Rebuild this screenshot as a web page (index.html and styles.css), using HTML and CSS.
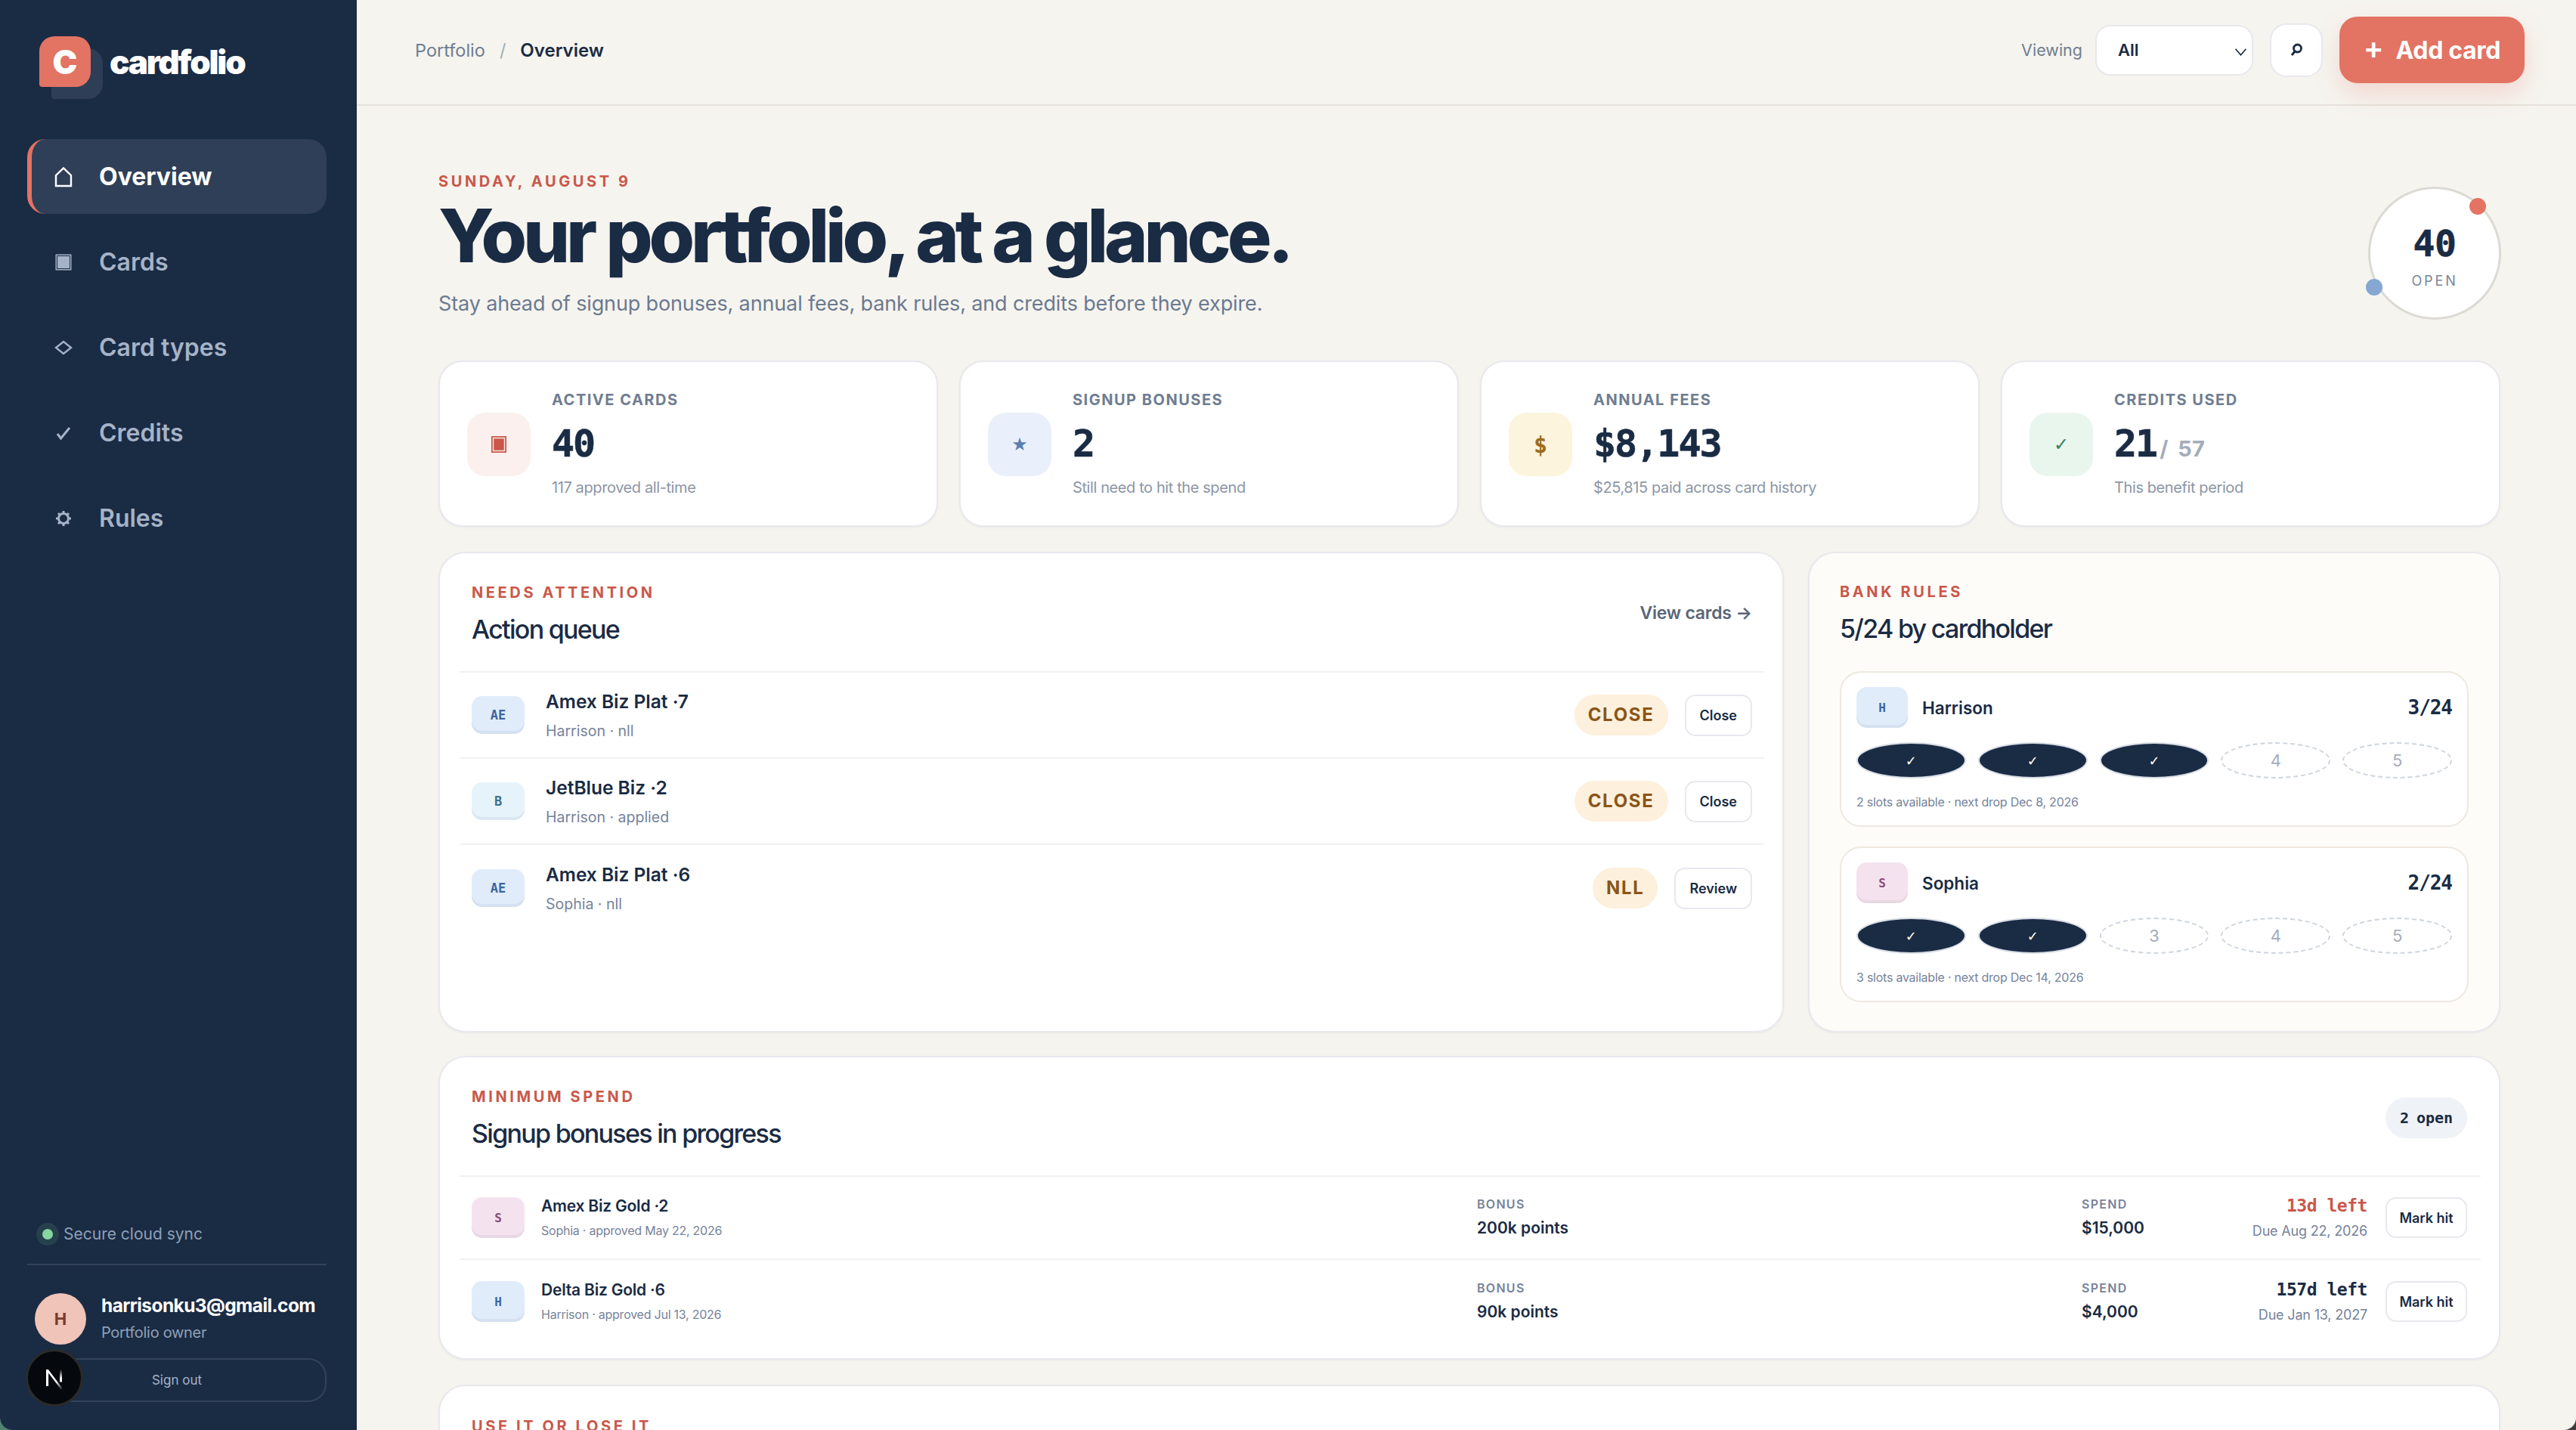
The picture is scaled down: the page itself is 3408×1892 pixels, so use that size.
FILE: index.html
```html
<!DOCTYPE html>
<html lang="en">
<head>
<meta charset="utf-8">
<title>cardfolio</title>
<link rel="stylesheet" href="styles.css">
</head>
<body>
<div class="app">
  <aside class="side">
    <div class="brand">
      <div class="logo"><span class="logo-c">C</span></div>
      <span class="brand-name">cardfolio</span>
    </div>
    <nav class="nav">
      <a class="nav-item active"><svg class="nav-ic" viewBox="0 0 24 28"><path d="M2 26V12L12 2.500 22 12v14z" fill="none" stroke="currentColor" stroke-width="2.400"/></svg>Overview</a>
      <a class="nav-item"><svg class="nav-ic" viewBox="0 -2 24 28"><rect x="1.500" y="1.500" width="21" height="21" fill="currentColor"/><rect x="3.500" y="3.500" width="17" height="17" fill="none" stroke="#1a2b44" stroke-width="1"/></svg>Cards</a>
      <a class="nav-item"><svg class="nav-ic" viewBox="0 -2 24 28"><path d="M12 4l10 8-10 8-10-8z" fill="none" stroke="currentColor" stroke-width="2.400"/></svg>Card types</a>
      <a class="nav-item"><svg class="nav-ic" viewBox="0 -2 24 28"><path d="M4 13l4.500 6L20 5" fill="none" stroke="currentColor" stroke-width="3"/></svg>Credits</a>
      <a class="nav-item"><svg class="nav-ic" viewBox="0 -2 24 28"><circle cx="12" cy="12" r="6.500" fill="none" stroke="currentColor" stroke-width="3"/><path d="M12 2v4M12 18v4M2 12h4M18 12h4M5 5l3 3M16 16l3 3M19 5l-3 3M8 16l-3 3" stroke="currentColor" stroke-width="3"/></svg>Rules</a>
    </nav>
    <div class="side-foot">
      <div class="sync"><span class="sync-dot"></span>Secure cloud sync</div>
      <div class="user">
        <div class="user-av">H</div>
        <div class="user-txt">
          <div class="user-mail">harrisonku3@gmail.com</div>
          <div class="user-role">Portfolio owner</div>
        </div>
      </div>
      <button class="signout">Sign out</button>
    </div>
    <div class="next-badge"><svg viewBox="0 0 40 40" class="next-n"><defs><linearGradient id="nfade" x1="0" y1="0" x2="1" y2="1"><stop offset="0.6" stop-color="#fff"/><stop offset="1" stop-color="#fff" stop-opacity="0"/></linearGradient><linearGradient id="nfade2" x1="0" y1="0" x2="0" y2="1"><stop offset="0" stop-color="#fff" stop-opacity="0"/><stop offset="0.7" stop-color="#fff"/></linearGradient></defs><path d="M10 30V10h2.600L30 33l-2 1L12.800 14v16z" fill="url(#nfade)"/><rect x="26.500" y="10" width="2.600" height="15" fill="url(#nfade2)"/></svg></div>
  </aside>
  <div class="main">
    <header class="top">
      <div class="crumbs"><span class="crumb">Portfolio</span><span class="crumb-sep">/</span><span class="crumb-now">Overview</span></div>
      <div class="top-right">
        <span class="viewing">Viewing</span>
        <div class="select">All<svg class="chev" viewBox="0 0 16 16"><path d="M1.500 4.500L8 12l6.500-7.500" fill="none" stroke="#1a2b44" stroke-width="1.600"/></svg></div>
        <button class="search"><svg viewBox="0 0 20 20" class="search-ic"><circle cx="11.500" cy="8" r="5" fill="none" stroke="#1a2b44" stroke-width="2.800"/><path d="M8 12l-4 5" stroke="#1a2b44" stroke-width="3"/></svg></button>
        <button class="add"><span class="add-plus">+</span>Add card</button>
      </div>
    </header>
    <main class="content">
      <section class="hero">
        <div class="hero-txt">
          <div class="date">SUNDAY, AUGUST 9</div>
          <h1 class="title">Your portfolio, at a glance.</h1>
          <p class="lede">Stay ahead of signup bonuses, annual fees, bank rules, and credits before they expire.</p>
        </div>
        <div class="ring">
          <span class="ring-num">40</span>
          <span class="ring-lab">OPEN</span>
          <i class="ring-dot red"></i>
          <i class="ring-dot blue"></i>
        </div>
      </section>

      <section class="stats">
        <div class="stat">
          <div class="stat-ic red"><svg viewBox="0 0 20 22" width="20" height="22"><rect x="0" y="0" width="20" height="22" fill="#c9584a"/><rect x="2.500" y="2.500" width="15" height="17" fill="none" stroke="#fbe7e2" stroke-width="1.500"/></svg></div>
          <div class="stat-body"><div class="stat-lab">ACTIVE CARDS</div><div class="stat-val">40</div><div class="stat-sub">117 approved all-time</div></div>
        </div>
        <div class="stat">
          <div class="stat-ic blue"><span class="gl">★</span></div>
          <div class="stat-body"><div class="stat-lab">SIGNUP BONUSES</div><div class="stat-val">2</div><div class="stat-sub">Still need to hit the spend</div></div>
        </div>
        <div class="stat">
          <div class="stat-ic amber"><span class="gl b">$</span></div>
          <div class="stat-body"><div class="stat-lab">ANNUAL FEES</div><div class="stat-val">$8,143</div><div class="stat-sub">$25,815 paid across card history</div></div>
        </div>
        <div class="stat">
          <div class="stat-ic green"><span class="gl">✓</span></div>
          <div class="stat-body"><div class="stat-lab">CREDITS USED</div><div class="stat-val">21<span class="stat-of">/ 57</span></div><div class="stat-sub">This benefit period</div></div>
        </div>
      </section>

      <section class="two">
        <div class="panel">
          <div class="panel-head">
            <div><div class="eyebrow">NEEDS ATTENTION</div><h2 class="panel-title">Action queue</h2></div>
            <a class="view">View cards →</a>
          </div>
          <div class="row">
            <div class="av av-blue">AE</div>
            <div class="row-txt"><div class="row-name">Amex Biz Plat ·7</div><div class="row-sub">Harrison · nll</div></div>
            <span class="pill">CLOSE</span><button class="btn">Close</button>
          </div>
          <div class="row">
            <div class="av av-sky">B</div>
            <div class="row-txt"><div class="row-name">JetBlue Biz ·2</div><div class="row-sub">Harrison · applied</div></div>
            <span class="pill">CLOSE</span><button class="btn">Close</button>
          </div>
          <div class="row">
            <div class="av av-blue">AE</div>
            <div class="row-txt"><div class="row-name">Amex Biz Plat ·6</div><div class="row-sub">Sophia · nll</div></div>
            <span class="pill">NLL</span><button class="btn">Review</button>
          </div>
        </div>
        <div class="panel panel-cream">
          <div class="panel-head bank-head">
            <div><div class="eyebrow">BANK RULES</div><h2 class="panel-title">5/24 by cardholder</h2></div>
          </div>
          <div class="holder">
            <div class="holder-top"><div class="av av-blue av-sm">H</div><span class="holder-name">Harrison</span><span class="holder-count">3/24</span></div>
            <div class="slots"><span class="slot on">✓</span><span class="slot on">✓</span><span class="slot on">✓</span><span class="slot">4</span><span class="slot">5</span></div>
            <div class="holder-sub">2 slots available · next drop Dec 8, 2026</div>
          </div>
          <div class="holder">
            <div class="holder-top"><div class="av av-pink av-sm">S</div><span class="holder-name">Sophia</span><span class="holder-count">2/24</span></div>
            <div class="slots"><span class="slot on">✓</span><span class="slot on">✓</span><span class="slot">3</span><span class="slot">4</span><span class="slot">5</span></div>
            <div class="holder-sub">3 slots available · next drop Dec 14, 2026</div>
          </div>
        </div>
      </section>

      <section class="panel spend">
        <div class="panel-head">
          <div><div class="eyebrow">MINIMUM SPEND</div><h2 class="panel-title">Signup bonuses in progress</h2></div>
          <span class="count">2 open</span>
        </div>
        <div class="brow">
          <div class="b-id"><div class="av av-pink av-b">S</div><div><div class="b-name">Amex Biz Gold ·2</div><div class="b-sub">Sophia · approved May 22, 2026</div></div></div>
          <div class="b-col"><div class="b-lab">BONUS</div><div class="b-val">200k points</div></div>
          <div class="b-col"><div class="b-lab">SPEND</div><div class="b-val">$15,000</div></div>
          <div class="b-end"><div class="b-due"><div class="b-left hot">13d left</div><div class="b-date">Due Aug 22, 2026</div></div><button class="btn btn-mark">Mark hit</button></div>
        </div>
        <div class="brow">
          <div class="b-id"><div class="av av-blue av-b">H</div><div><div class="b-name">Delta Biz Gold ·6</div><div class="b-sub">Harrison · approved Jul 13, 2026</div></div></div>
          <div class="b-col"><div class="b-lab">BONUS</div><div class="b-val">90k points</div></div>
          <div class="b-col"><div class="b-lab">SPEND</div><div class="b-val">$4,000</div></div>
          <div class="b-end"><div class="b-due"><div class="b-left">157d left</div><div class="b-date">Due Jan 13, 2027</div></div><button class="btn btn-mark">Mark hit</button></div>
        </div>
      </section>

      <section class="panel lose">
        <div class="eyebrow">USE IT OR LOSE IT</div>
      </section>
    </main>
  </div>
</div>
</body>
</html>
```
FILE: styles.css
```css
* { box-sizing: border-box; }
html { background: linear-gradient(90deg, #4f8570 50%, #3c3c3c 50%); }
html, body { margin: 0; height: 100%; overflow: hidden; }
body { font-family: "Inter", "Liberation Sans", sans-serif; color: #1a2b44; }
button { font-family: inherit; }
.app { display: flex; height: 1892px; overflow: hidden; background: #f6f4ef; border-radius: 0 0 16px 16px; }

.side { position: relative; width: 472px; flex: none; background: #1a2b44; padding: 48px 40px 37px 36px; display: flex; flex-direction: column; }
.brand { display: flex; gap: 25px; padding-left: 16px; height: 84px; align-items: flex-start; }
.logo { position: relative; width: 68px; height: 67px; background: #e37363; border-radius: 20px 20px 20px 4px; display: flex; align-items: center; justify-content: center; box-shadow: 16px 16px 0 #2e3e56; }
.logo-c { font: 900 44px/1 "Inter", sans-serif; color: #fff; }
.brand-name { font: 900 44px/68px "Inter", sans-serif; letter-spacing: -0.05em; color: #fff; }
.nav { margin-top: 52px; display: flex; flex-direction: column; gap: 14px; }
.nav-item { height: 99px; display: flex; align-items: center; gap: 35px; padding-left: 36px; font-weight: 600; font-size: 32px; color: #a5b3c8; border-radius: 24px; }
.nav-item.active { background: #2f3f57; color: #fff; border-left: 6px solid #e37363; padding-left: 30px; font-weight: 700; }
.nav-ic { width: 24px; height: 28px; flex: none; }
.side-foot { margin-top: auto; }
.sync { display: flex; align-items: center; gap: 6px; font-size: 21px; color: #8fa0b6; padding-left: 12px; padding-bottom: 25px; border-bottom: 2px solid #334359; height: 56px; }
.sync-dot { width: 14px; height: 14px; margin: 0 8px; border-radius: 50%; background: #86d6a0; box-shadow: 0 0 0 8px #27404d; flex: none; }
.user { display: flex; align-items: center; gap: 20px; padding: 35px 0 0 10px; }
.user-av { width: 68px; height: 68px; border-radius: 50%; background: #f0c4b8; color: #7a3b2e; font-weight: 700; font-size: 22px; display: flex; align-items: center; justify-content: center; flex: none; }
.user-mail { font-weight: 700; font-size: 24.500px; color: #fff; line-height: 36px; letter-spacing: -0.025em; white-space: nowrap; }
.user-role { font-size: 20px; color: #8fa0b6; line-height: 36px; letter-spacing: -0.015em; }
.signout { display: block; width: 100%; height: 58px; margin-top: 16px; background: transparent; border: 2px solid #334359; border-radius: 24px; color: #a5b3c8; font-size: 17px; }
.next-badge { position: absolute; left: 34px; top: 1785px; width: 76px; height: 76px; border-radius: 50%; background: #05090d; border: 3px solid #2b2b2b; display: flex; align-items: center; justify-content: center; }
.next-n { width: 44px; height: 44px; }

.main { flex: 1; min-width: 0; display: flex; flex-direction: column; }
.top { flex: none; height: 140px; border-bottom: 2px solid #e5e2db; display: flex; align-items: center; justify-content: space-between; padding: 0 68px 6px 77px; }
.crumbs { display: flex; align-items: center; font-size: 23.500px; }
.crumb { color: #6f7d91; }
.crumb-sep { color: #a3adba; margin: 0 19px; }
.crumb-now { font-weight: 600; font-size: 24px; color: #1a2b44; }
.top-right { display: flex; align-items: center; }
.viewing { font-size: 21.500px; color: #6f7d91; margin-right: 17px; }
.select { position: relative; width: 209px; height: 67px; background: #fff; border: 2px solid #e8e8ee; border-radius: 20px; padding-left: 28px; font-weight: 600; font-size: 22px; display: flex; align-items: center; }
.chev { position: absolute; right: 6px; top: 25px; width: 17px; height: 17px; }
.search { width: 70px; height: 71px; margin-left: 22px; background: #fff; border: 2px solid #e8e8ee; border-radius: 22px; display: flex; align-items: center; justify-content: center; padding: 0; }
.search-ic { width: 20px; height: 20px; }
.add { height: 88px; width: 245px; margin-left: 22px; background: #e37363; border: 0; border-radius: 24px; color: #fff; font-weight: 700; font-size: 32px; letter-spacing: -0.01em; display: flex; align-items: center; justify-content: center; gap: 16px; box-shadow: 0 14px 32px rgba(227, 115, 99, .22); }
.add-plus { font-size: 40px; font-weight: 600; line-height: 1; margin-top: -4px; }

.content { flex: 1; min-height: 0; overflow: hidden; padding: 0 100px 0 108px; }
.hero { display: flex; justify-content: space-between; padding-top: 88px; height: 337px; position: relative; }
.date { font-weight: 700; font-size: 20px; letter-spacing: .18em; color: #c9584a; line-height: 24px; }
.title { margin: 5px 0 0; font-weight: 800; font-size: 98px; line-height: 110px; letter-spacing: -0.053em; color: #1a2b44; }
.lede { margin: 15px 0 0; font-size: 27px; line-height: 40px; color: #6b7a8f; letter-spacing: -0.005em; }
.ring { position: absolute; right: -1px; top: 107px; width: 176px; height: 176px; border: 3px solid #dcdad4; background: #fff; border-radius: 50%; display: flex; flex-direction: column; align-items: center; }
.ring-num { font: 700 48px/56px "DejaVu Sans Mono", monospace; margin-top: 44px; letter-spacing: -0.01em; -webkit-text-stroke: .6px #1a2b44; }
.ring-lab { font-size: 18px; letter-spacing: .16em; color: #7a8698; margin-top: 11px; }
.ring-dot { position: absolute; width: 22px; height: 22px; border-radius: 50%; }
.ring-dot.red { background: #e37363; left: 131px; top: 12px; }
.ring-dot.blue { background: #86a7d2; left: -6px; top: 119px; }

.stats { display: grid; grid-template-columns: repeat(4, 1fr); gap: 28px; }
.stat { height: 220px; background: #fff; border: 2px solid #e8e8ee; border-radius: 32px; padding: 2px 36px 0; display: flex; align-items: center; gap: 28px; box-shadow: 0 1px 3px rgba(26, 43, 68, .05); }
.stat-ic { width: 84px; height: 84px; flex: none; border-radius: 24px; display: flex; align-items: center; justify-content: center; }
.stat-ic.red { background: #fbf0ed; }
.stat-ic.blue { background: #e9f0fb; color: #5a7fb0; }
.stat-ic.amber { background: #fcf4dd; color: #9a6c1c; }
.stat-ic.green { background: #e9f6ee; color: #3a7f5c; }
.gl { font-family: "DejaVu Sans", sans-serif; font-size: 24px; }
.gl.b { font-family: "DejaVu Sans Mono", monospace; font-weight: 700; font-size: 30px; }
.stat-lab { font-weight: 700; font-size: 20px; letter-spacing: .075em; line-height: 24px; color: #6f7d91; }
.stat-val { font: 700 50px/60px "DejaVu Sans Mono", monospace; margin-top: 16px; letter-spacing: -0.04em; display: flex; align-items: baseline; -webkit-text-stroke: .6px #1a2b44; }
.stat-of { font: 700 29px "Inter", sans-serif; color: #a3adba; margin-left: 4px; word-spacing: 6px; letter-spacing: 0; -webkit-text-stroke: 0; }
.stat-sub { font-size: 20px; line-height: 28px; color: #8c96a5; margin-top: 14px; letter-spacing: -0.02em; }

.two { display: grid; grid-template-columns: 1780px 1fr; gap: 32px; margin-top: 33px; height: 636px; }
.panel { background: #fff; border: 2px solid #e8e8ee; border-radius: 36px; padding: 0 24px 0 26px; box-shadow: 0 1px 3px rgba(26, 43, 68, .05); }
.panel-cream { background: #fdfcf8; padding: 0 40px; }
.panel-head { height: 158px; display: flex; align-items: center; justify-content: space-between; padding: 7px 16px 0; border-bottom: 2px solid #f1f1f3; }
.bank-head { border-bottom: 0; height: 156px; padding: 5px 0 0; }
.eyebrow { font-weight: 700; font-size: 20px; letter-spacing: .18em; color: #c9584a; line-height: 24px; }
.panel-title { margin: 14px 0 0; font-weight: 500; font-size: 34px; line-height: 46px; letter-spacing: -0.05em; color: #1a2b44; }
.view { font-weight: 600; font-size: 23px; color: #5a6678; letter-spacing: -0.01em; margin-bottom: 6px; }
.row { height: 114px; display: flex; align-items: center; padding: 0 16px; border-bottom: 2px solid #f1f1f3; }
.row:last-child { border-bottom: 0; }
.av { width: 70px; height: 50px; flex: none; border-radius: 14px; display: flex; align-items: center; justify-content: center; font-family: "DejaVu Sans Mono", monospace; font-weight: 700; font-size: 17px; box-shadow: inset 0 -4px 0 rgba(26, 43, 68, .06); }
.av-blue { background: #e1ecfb; color: #3d669c; }
.av-sky { background: #e6f3fb; color: #3f7290; }
.av-pink { background: #f4e3ee; color: #8d4a74; }
.av-sm { width: 68px; height: 54px; font-size: 16px; }
.av-b { height: 54px; font-size: 16px; }
.row-txt { flex: 1; margin-left: 28px; }
.row-name { font-weight: 600; font-size: 24.500px; line-height: 32px; }
.row-sub { font-size: 19.500px; line-height: 28px; color: #76839a; margin-top: 9px; }
.pill { height: 54px; padding: 0 18px; background: #fdf0dc; color: #8a5518; border-radius: 27px; font: 700 24px/54px "Inter", sans-serif; letter-spacing: .07em; margin-right: 22px; }
.btn { height: 55px; padding: 0 18px; background: #fff; border: 2px solid #e8e8ee; border-radius: 14px; font-weight: 600; font-size: 18px; color: #1a2b44; }

.holder { height: 206px; margin-bottom: 26px; background: #fff; border: 2px solid #ede8e0; border-radius: 28px; padding: 19px 20px 0; }
.holder-top { display: flex; align-items: center; }
.holder-name { margin-left: 19px; font-weight: 600; font-size: 22.500px; flex: 1; }
.holder-count { font: 700 26px "DejaVu Sans Mono", monospace; letter-spacing: -0.04em; }
.slots { display: grid; grid-template-columns: repeat(5, 1fr); gap: 16px; margin-top: 19px; }
.slot { height: 48px; border-radius: 50%; border: 2px dashed #cfd5de; display: flex; align-items: center; justify-content: center; color: #a3adba; font-size: 22px; }
.slot.on { background: #1a2b44; border: 2px solid #d9dee6; color: #fff; font-family: "DejaVu Sans", sans-serif; font-size: 18px; }
.holder-sub { margin-top: 19px; font-size: 16px; line-height: 24px; color: #76839a; letter-spacing: -0.015em; }

.spend { margin-top: 31px; height: 402px; }
.brow { height: 110px; display: grid; grid-template-columns: 1330px 800px 1fr auto; align-items: center; padding: 0 18px 0 16px; border-bottom: 2px solid #f1f1f3; }
.brow:last-child { border-bottom: 0; }
.b-id { display: flex; align-items: center; gap: 22px; }
.b-name { font-weight: 600; font-size: 21px; line-height: 28px; letter-spacing: -0.01em; }
.b-sub { font-size: 16px; line-height: 24px; color: #76839a; margin-top: 6px; letter-spacing: -0.015em; }
.b-lab { font-weight: 600; font-size: 16px; letter-spacing: .08em; color: #76839a; line-height: 20px; }
.b-val { font-weight: 600; font-size: 21px; line-height: 28px; margin-top: 8px; }
.b-end { display: flex; align-items: center; justify-content: flex-end; gap: 24px; }
.b-due { text-align: right; }
.b-left { font: 700 23px/30px "DejaVu Sans Mono", monospace; letter-spacing: -0.02em; }
.b-left.hot { color: #c9584a; }
.b-date { font-size: 18px; line-height: 26px; color: #76839a; margin-top: 6px; letter-spacing: -0.01em; }
.btn-mark { width: 108px; height: 54px; padding: 0; white-space: nowrap; }
.count { height: 54px; width: 108px; margin-right: 2px; border-radius: 27px; background: #eff2f6; display: flex; align-items: center; justify-content: center; font: 700 20px "DejaVu Sans Mono", monospace; word-spacing: -2px; position: relative; top: -2px; }
.lose { margin-top: 33px; height: 200px; padding: 41px 42px; }
```
